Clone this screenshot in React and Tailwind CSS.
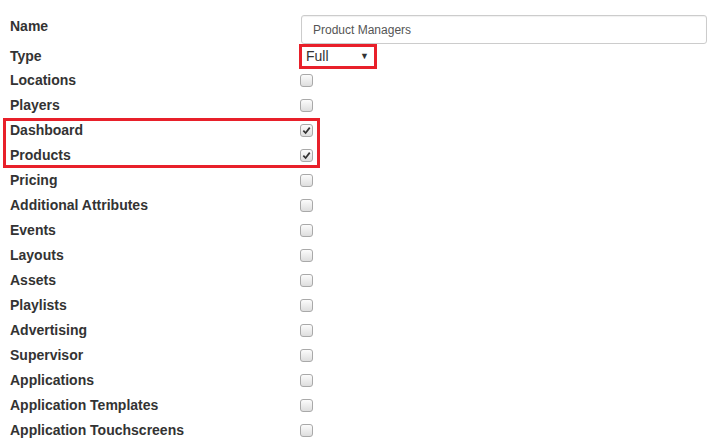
import { useState } from "react";

const modules = [
  { name: "Locations", on: false },
  { name: "Players", on: false },
  { name: "Dashboard", on: true, flagged: true },
  { name: "Products", on: true, flagged: true },
  { name: "Pricing", on: false },
  { name: "Additional Attributes", on: false },
  { name: "Events", on: false },
  { name: "Layouts", on: false },
  { name: "Assets", on: false },
  { name: "Playlists", on: false },
  { name: "Advertising", on: false },
  { name: "Supervisor", on: false },
  { name: "Applications", on: false },
  { name: "Application Templates", on: false },
  { name: "Application Touchscreens", on: false },
];

function Check({ checked }) {
  return (
    <span className="flex h-[13px] w-[13px] items-center justify-center rounded-[3px] border border-[#a9a9a9] bg-gradient-to-b from-[#fcfcfc] to-[#dedede]">
      {checked && (
        <svg viewBox="0 0 10 10" className="h-[9px] w-[9px]">
          <path d="M1.5 5.2 L4 7.8 L8.6 1.8" fill="none" stroke="#333" strokeWidth="1.9" />
        </svg>
      )}
    </span>
  );
}

function Row({ item }) {
  return (
    <div className="flex h-[25px] items-center">
      <div className="w-[290px] text-[14px] font-bold text-[#333]">{item.name}</div>
      <Check checked={item.on} />
    </div>
  );
}

export default function App() {
  const [title] = useState("Product Managers");
  const flagged = modules.filter((m) => m.flagged);
  const before = modules.slice(0, 2);
  const after = modules.slice(4);

  return (
    <div className="h-[442px] w-[722px] overflow-hidden bg-white px-[10px] pt-[15px] font-['Liberation_Sans',Arial,sans-serif]">
      {/* name */}
      <div className="flex h-[29px]">
        <div className="w-[291px] pt-[1px] text-[14px] font-bold text-[#333]">Name</div>
        <div className="flex h-[29px] w-[406px] items-center rounded-[3px] border border-[#ccc] bg-white px-[11px] text-[12px] text-[#555] shadow-[inset_0_1px_1px_rgba(0,0,0,0.06)]">
          {title}
        </div>
      </div>

      {/* type */}
      <div className="flex h-[24px] items-center">
        <div className="w-[289px] text-[14px] font-bold text-[#333]">Type</div>
        <div className="flex h-[25px] w-[78px] items-center justify-between border-[3px] border-[#e8202a] pl-[4px] pr-[5px] text-[14px] text-[#333]">
          <span>Full</span>
          <span className="text-[9px] leading-none">▼</span>
        </div>
      </div>

      {before.map((m) => (
        <Row key={m.name} item={m} />
      ))}

      <div className="-ml-[7px] w-[317px] pl-[7px] ring-[3px] ring-inset ring-[#e8202a]">
        {flagged.map((m) => (
          <Row key={m.name} item={m} />
        ))}
      </div>

      {after.map((m) => (
        <Row key={m.name} item={m} />
      ))}
    </div>
  );
}
